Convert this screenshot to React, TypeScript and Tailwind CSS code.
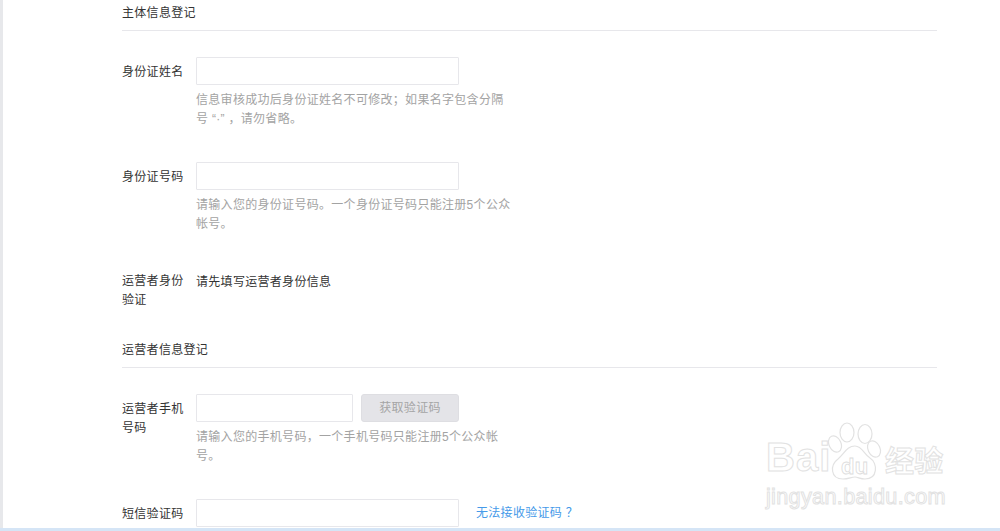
import React from 'react';

const fontStack = "font-['Liberation_Sans','Noto_Sans_CJK_SC',sans-serif]";

const Field: React.FC<{ label: React.ReactNode; children: React.ReactNode; className?: string }> = ({ label, children, className }) => (
  <div className={`flex ${className ?? ''}`}>
    <div className="w-[74px] shrink-0 pr-[10px] pt-[6px] text-[12px] leading-[19px] text-[#333]">{label}</div>
    <div className="flex-1">{children}</div>
  </div>
);

const TextBox: React.FC<{ width?: string }> = ({ width = 'w-[263px]' }) => (
  <input type="text" className={`${width} h-[28px] bg-white border border-[#e7e7eb] rounded-[1px] block`} />
);

const Hint: React.FC<{ children: React.ReactNode }> = ({ children }) => (
  <p className="w-[318px] mt-[6px] text-[12px] leading-[19px] text-[#a3a3a3]">{children}</p>
);

const SectionTitle: React.FC<{ children: React.ReactNode }> = ({ children }) => (
  <h3 className="h-[31px] border-b border-[#e7e7eb] text-[12px] leading-[26px] text-[#333]">{children}</h3>
);

const Watermark = () => (
  <div className="absolute left-[766px] top-[422px] w-[182px] h-[90px] pointer-events-none select-none text-transparent [-webkit-text-stroke:1px_#e2e2e2]">
    <div className="flex items-end h-[58px]">
      <span className="w-[65px] text-[40px] leading-[46px] font-bold tracking-[1px]">Bai</span>
      <svg width="54" height="58" viewBox="0 0 54 58" fill="none" stroke="#e2e2e2" strokeWidth="1.2" className="shrink-0 -ml-[3px]">
        <ellipse cx="7" cy="22" rx="6" ry="8.5" transform="rotate(-25 7 22)" />
        <ellipse cx="19" cy="10.5" rx="7" ry="9.5" />
        <ellipse cx="37" cy="12" rx="7" ry="9.5" />
        <ellipse cx="46" cy="27" rx="6" ry="8.5" transform="rotate(-25 46 27)" />
        <path d="M27 24 C34 24 36 32 42 36 C50 41 50 57 37 57 C32 57 30 55 27 55 C23 55 21 57 15 57 C2 57 2 43 10 37 C16 32 19 24 27 24 Z" />
        <text x="13" y="52" fontSize="22" fontWeight="700" fontFamily="Liberation Sans, sans-serif" fill="none" stroke="#dcdcdc" strokeWidth="0.8">du</text>
      </svg>
      <span className="ml-[3px] text-[29px] leading-[36px] font-bold whitespace-nowrap">经验</span>
    </div>
    <div className="mt-[3px] text-[21.7px] leading-[28px] whitespace-nowrap">jingyan.baidu.com</div>
  </div>
);

export default function App() {
  return (
    <div className={`relative h-[531px] w-[1000px] overflow-hidden bg-white flex flex-col tracking-[0.3px] ${fontStack}`}>
      <div className="flex flex-1 min-h-0">
        <div className="w-[3px] shrink-0 bg-[#e7e8eb]" />
        <div className="w-[815px] ml-[119px]">
          <SectionTitle>主体信息登记</SectionTitle>

          <Field label="身份证姓名" className="mt-[26px]">
            <TextBox />
            <Hint>信息审核成功后身份证姓名不可修改；如果名字包含分隔号 “·” ，请勿省略。</Hint>
          </Field>

          <Field label="身份证号码" className="mt-[33px]">
            <TextBox />
            <Hint>请输入您的身份证号码。一个身份证号码只能注册5个公众帐号。</Hint>
          </Field>

          <Field label="运营者身份验证" className="mt-[32px]">
            <p className="pt-[7px] text-[12px] leading-[19px] text-[#333]">请先填写运营者身份信息</p>
          </Field>

          <div className="mt-[27px]">
            <SectionTitle>运营者信息登记</SectionTitle>
          </div>

          <Field label="运营者手机号码" className="mt-[26px]">
            <div className="flex gap-[8px]">
              <TextBox width="w-[157px]" />
              <button className="w-[98px] h-[28px] rounded-[3px] bg-[#e4e4e8] border border-[#dedee2] text-[12px] text-[#a5a5a5]">获取验证码</button>
            </div>
            <Hint>请输入您的手机号码，一个手机号码只能注册5个公众帐号。</Hint>
          </Field>

          <Field label="短信验证码" className="mt-[33px]">
            <div className="flex items-center gap-[17px]">
              <TextBox />
              <a className="text-[12px] leading-[19px] text-[#459ae9]">无法接收验证码 ？</a>
            </div>
          </Field>
        </div>
      </div>
      <div className="h-[3px] shrink-0 bg-[#d5e5f6]" />
      <Watermark />
    </div>
  );
}
